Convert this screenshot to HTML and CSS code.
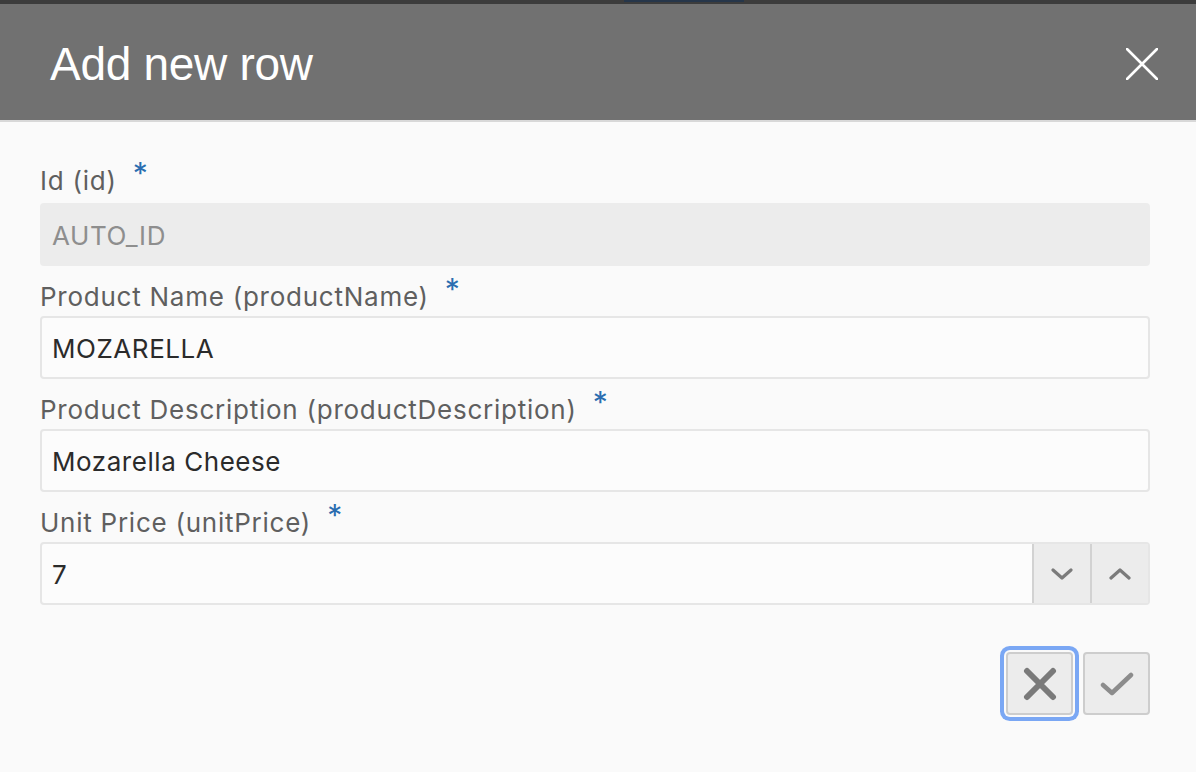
FILE: index.html
```html
<!DOCTYPE html>
<html lang="en">
<head>
<meta charset="utf-8">
<title>Add new row</title>
<link rel="stylesheet" href="styles.css">
</head>
<body>
<div class="topstrip"><div class="topstrip-mark"></div></div>
<div class="dialog">
  <header class="dialog-header">
    <h1 class="dialog-title">Add new row</h1>
    <button class="close-btn" aria-label="Close">
      <svg width="32" height="32" viewBox="0 0 32 32"><path d="M1 1 L31 31 M31 1 L1 31" stroke="#fff" stroke-width="2.6" stroke-linecap="round" fill="none"/></svg>
    </button>
  </header>
  <div class="dialog-body">
    <div class="field field-first">
      <label class="field-label">Id (id) <span class="req">*</span></label>
      <div class="input input-disabled">AUTO_ID</div>
    </div>
    <div class="field">
      <label class="field-label">Product Name (productName) <span class="req">*</span></label>
      <div class="input">MOZARELLA</div>
    </div>
    <div class="field">
      <label class="field-label">Product Description (productDescription) <span class="req">*</span></label>
      <div class="input">Mozarella Cheese</div>
    </div>
    <div class="field">
      <label class="field-label">Unit Price (unitPrice) <span class="req">*</span></label>
      <div class="input input-number">
        <span class="input-value">7</span>
        <span class="spin">
          <svg width="22" height="12" viewBox="0 0 22 12"><path d="M2 2 L11 10 L20 2" stroke="#7b7b7b" stroke-width="3.2" fill="none" stroke-linecap="round" stroke-linejoin="round"/></svg>
        </span>
        <span class="spin">
          <svg width="22" height="12" viewBox="0 0 22 12"><path d="M2 10 L11 2 L20 10" stroke="#7b7b7b" stroke-width="3.2" fill="none" stroke-linecap="round" stroke-linejoin="round"/></svg>
        </span>
      </div>
    </div>
    <div class="actions">
      <button class="action-btn focused" aria-label="Cancel">
        <svg width="34" height="34" viewBox="0 0 34 34"><path d="M4 4 L30 30 M30 4 L4 30" stroke="#7a7a7a" stroke-width="6" stroke-linecap="round" fill="none"/></svg>
      </button>
      <button class="action-btn" aria-label="Save">
        <svg width="34" height="26" viewBox="0 0 34 26"><path d="M3 14 L12 22 L31 4" stroke="#8c8c8c" stroke-width="4.5" stroke-linecap="round" stroke-linejoin="round" fill="none"/></svg>
      </button>
    </div>
  </div>
</div>
</body>
</html>
```

FILE: styles.css
```css
* { box-sizing: border-box; }
html, body {
  margin: 0;
  padding: 0;
  background: #fafafa;
  font-family: Inter, "Liberation Sans", sans-serif;
}
.topstrip {
  height: 4px;
  background: #3c3c3c;
  padding-left: 624px;
}
.topstrip-mark {
  width: 120px;
  height: 2px;
  background: #26364a;
}
.dialog {
  padding-bottom: 40px;
}
.dialog-header {
  height: 118px;
  background: #717171;
  border-bottom: 2px solid #d8d8d8;
  display: flex;
  align-items: center;
  justify-content: space-between;
  padding: 3px 38px 0 50px;
}
.dialog-title {
  margin: 0;
  color: #fff;
  font-family: "Liberation Sans", Inter, sans-serif;
  font-weight: 400;
  font-size: 46px;
  letter-spacing: -0.3px;
}
.close-btn {
  background: none;
  border: 0;
  padding: 0;
  display: flex;
  cursor: pointer;
}
.dialog-body {
  padding: 31px 46px 0 40px;
}
.field-label {
  display: block;
  height: 50px;
  padding-top: 14px;
  font-size: 26px;
  letter-spacing: 0.75px;
  line-height: 30px;
  color: #5f5f5f;
}
.field-first .field-label {
  padding-top: 11px;
}
.req {
  color: #2a6db0;
  font-size: 30px;
  position: relative;
  top: -6px;
  margin-left: 8px;
}
.input {
  height: 63px;
  border: 2px solid #e6e6e6;
  border-radius: 4px;
  background: #fcfcfc;
  display: flex;
  align-items: center;
  padding: 2px 0 0 10px;
  font-size: 26px;
  letter-spacing: 0.55px;
  color: #2b2b2b;
}
.input-disabled {
  background: #ececec;
  border-color: #ececec;
  color: #8e8e8e;
}
.input-number {
  padding: 0;
  align-items: stretch;
}
.input-value {
  flex: 1;
  display: flex;
  align-items: center;
  padding: 2px 0 0 10px;
}
.spin {
  width: 58px;
  background: #ececec;
  border-left: 2px solid #d2d2d2;
  display: flex;
  align-items: center;
  justify-content: center;
}
.actions {
  display: flex;
  justify-content: flex-end;
  gap: 10px;
  margin-top: 47px;
}
.action-btn {
  width: 67px;
  height: 63px;
  background: #ececec;
  border: 2px solid #cdcdcd;
  border-radius: 4px;
  display: flex;
  align-items: center;
  justify-content: center;
  padding: 0;
}
.action-btn.focused {
  box-shadow: 0 0 0 2px #fafafa, 0 0 0 6px #7aa7f4;
}
```
